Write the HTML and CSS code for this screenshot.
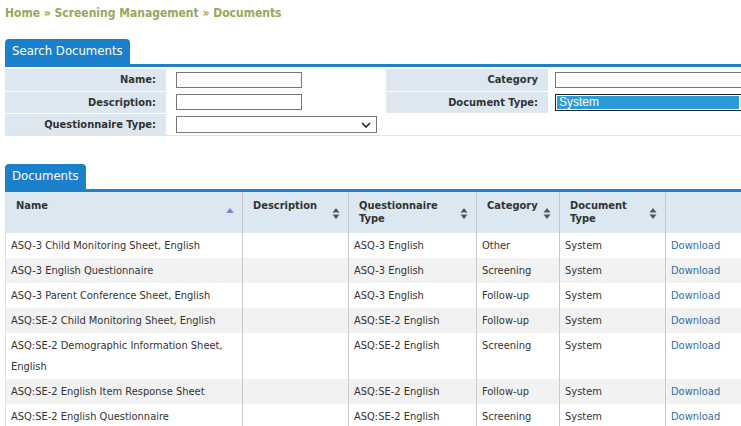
FILE: index.html
```html
<!DOCTYPE html>
<html>
<head>
<meta charset="utf-8">
<link rel="stylesheet" href="styles.css">
</head>
<body>
<div class="page">
  <div class="crumbs">Home » Screening Management » Documents</div>

  <div class="tabbar tabbar1"><span class="tab">Search Documents</span></div>
  <table class="form">
    <colgroup>
      <col class="c1"><col class="c2"><col class="c3"><col class="c4">
    </colgroup>
    <tr>
      <th class="lbl">Name:</th>
      <td class="fld"><input class="txt" type="text"></td>
      <th class="lbl">Category</th>
      <td class="fld fld2"><input class="txt wide" type="text"></td>
    </tr>
    <tr>
      <th class="lbl">Description:</th>
      <td class="fld"><input class="txt" type="text"></td>
      <th class="lbl">Document Type:</th>
      <td class="fld fld2">
        <div class="listbox"><div class="opt">System</div><div class="sb"></div></div>
      </td>
    </tr>
    <tr>
      <th class="lbl">Questionnaire Type:</th>
      <td class="fld">
        <div class="selwrap">
          <select class="sel"><option></option></select>
          <svg class="chev" width="10" height="6" viewBox="0 0 10 6"><path d="M1 1 L5 5 L9 1" fill="none" stroke="#222" stroke-width="1.6"/></svg>
        </div>
      </td>
      <td class="blank"></td>
      <td class="blank"></td>
    </tr>
  </table>

  <div class="tabbar tabbar2"><span class="tab">Documents</span></div>
  <table class="grid">
    <colgroup>
      <col style="width:237px"><col style="width:106px"><col style="width:128px"><col style="width:83px"><col style="width:106px"><col style="width:100px">
    </colgroup>
    <thead>
      <tr>
        <th><div class="hd"><span>Name</span><svg class="sort" width="8" height="13" viewBox="0 0 8 13"><path d="M0 6 L4 1 L8 6 Z" fill="#8585cf"/></svg></div></th>
        <th><div class="hd"><span>Description</span><svg class="sort" width="8" height="13" viewBox="0 0 8 13"><path d="M0.5 5.5 L4 1 L7.5 5.5 Z M0.5 7.5 L7.5 7.5 L4 12 Z" fill="#555"/></svg></div></th>
        <th><div class="hd"><span>Questionnaire Type</span><svg class="sort" width="8" height="13" viewBox="0 0 8 13"><path d="M0.5 5.5 L4 1 L7.5 5.5 Z M0.5 7.5 L7.5 7.5 L4 12 Z" fill="#555"/></svg></div></th>
        <th><div class="hd"><span>Category</span><svg class="sort" width="8" height="13" viewBox="0 0 8 13"><path d="M0.5 5.5 L4 1 L7.5 5.5 Z M0.5 7.5 L7.5 7.5 L4 12 Z" fill="#555"/></svg></div></th>
        <th><div class="hd"><span>Document Type</span><svg class="sort" width="8" height="13" viewBox="0 0 8 13"><path d="M0.5 5.5 L4 1 L7.5 5.5 Z M0.5 7.5 L7.5 7.5 L4 12 Z" fill="#555"/></svg></div></th>
        <th></th>
      </tr>
    </thead>
    <tbody>
      <tr><td>ASQ-3 Child Monitoring Sheet, English</td><td></td><td>ASQ-3 English</td><td>Other</td><td>System</td><td><a href="#">Download</a></td></tr>
      <tr><td>ASQ-3 English Questionnaire</td><td></td><td>ASQ-3 English</td><td>Screening</td><td>System</td><td><a href="#">Download</a></td></tr>
      <tr><td>ASQ-3 Parent Conference Sheet, English</td><td></td><td>ASQ-3 English</td><td>Follow-up</td><td>System</td><td><a href="#">Download</a></td></tr>
      <tr><td>ASQ:SE-2 Child Monitoring Sheet, English</td><td></td><td>ASQ:SE-2 English</td><td>Follow-up</td><td>System</td><td><a href="#">Download</a></td></tr>
      <tr><td>ASQ:SE-2 Demographic Information Sheet, English</td><td></td><td>ASQ:SE-2 English</td><td>Screening</td><td>System</td><td><a href="#">Download</a></td></tr>
      <tr><td>ASQ:SE-2 English Item Response Sheet</td><td></td><td>ASQ:SE-2 English</td><td>Follow-up</td><td>System</td><td><a href="#">Download</a></td></tr>
      <tr><td>ASQ:SE-2 English Questionnaire</td><td></td><td>ASQ:SE-2 English</td><td>Screening</td><td>System</td><td><a href="#">Download</a></td></tr>
    </tbody>
  </table>
</div>
</body>
</html>
```

FILE: styles.css
```css
html, body {
  margin: 0;
  padding: 0;
  overflow: hidden;
  background: #fff;
}
body {
  font-family: "DejaVu Sans Condensed", "DejaVu Sans", Verdana, sans-serif;
  font-stretch: condensed;
  font-size: 11px;
  color: #333;
}
.page {
  width: 830px;
  padding: 0 0 0 5px;
}
.crumbs {
  font-weight: bold;
  font-size: 12px;
  color: #9aa65a;
  padding-top: 6px;
  height: 39px;
  box-sizing: border-box;
}
.tabbar {
  display: flex;
  border-bottom: 3px solid #1f80c6;
}
.tabbar1 {
  margin-bottom: 2px;
}
.tabbar2 {
  margin-top: 28px;
}
.tab {
  background: #1b80cb;
  color: #fff;
  font-size: 13px;
  padding: 0 7px;
  height: 25px;
  line-height: 24px;
  border-radius: 4px 4px 0 0;
}
.form {
  border-collapse: collapse;
  width: 793px;
  table-layout: fixed;
  border-bottom: 1px solid #dbe6ef;
}
.form .c1 { width: 161px; }
.form .c2 { width: 220px; }
.form .c3 { width: 162px; }
.form .c4 { width: 250px; }
.form th, .form td {
  box-sizing: border-box;
}
.form tr + tr th, .form tr + tr td {
  border-top: 1px solid #fff;
}
.form .lbl {
  background: #dce7f0;
  text-align: right;
  font-weight: bold;
  padding: 0 10px 0 0;
  height: 22px;
  white-space: nowrap;
}
.form .fld {
  padding: 0 0 0 10px;
  height: 22px;
}
.form .fld2 { padding-left: 7px; }
.txt {
  display: block;
  box-sizing: border-box;
  width: 126px;
  height: 16px;
  border: 1px solid #767676;
  margin: 0;
  padding: 0 2px;
  font-size: 11px;
}
.txt.wide { width: 220px; }
.listbox {
  display: flex;
  box-sizing: border-box;
  width: 220px;
  height: 17px;
  border: 1px solid #222;
  padding: 1px;
}
.opt {
  width: 180px;
  background: #2b9bd8;
  color: #fff;
  font-family: "Liberation Sans", Arial, sans-serif;
  font-stretch: normal;
  font-size: 12px;
  line-height: 13px;
  padding-left: 2px;
}
.sb {
  flex: 1;
  background: #e6e6e6;
  margin-left: 1px;
}
.selwrap {
  position: relative;
  width: 201px;
  height: 17px;
}
.sel {
  appearance: none;
  -webkit-appearance: none;
  box-sizing: border-box;
  width: 201px;
  height: 17px;
  border: 1px solid #767676;
  border-radius: 0;
  background: #fff;
  margin: 0;
  font-size: 11px;
  display: block;
}
.chev {
  position: absolute;
  right: 6px;
  top: 6px;
}
.blank {
  background: #fff;
}
.grid {
  border-collapse: collapse;
  table-layout: fixed;
  width: 760px;
}
.grid th {
  background: #dbe7f1;
  text-align: left;
  vertical-align: top;
  font-weight: bold;
  height: 41px;
  padding: 0;
  border-right: 1px solid #c4c8cc;
  box-sizing: border-box;
}
.hd {
  display: flex;
  justify-content: space-between;
  align-items: flex-start;
  padding: 7px 8px 0 10px;
  line-height: 13px;
}
.sort {
  flex: none;
  margin-top: 8px;
  margin-left: 4px;
}
.grid td {
  padding: 2px 5px;
  line-height: 21px;
  vertical-align: top;
  border-right: 1px solid #c8c8c8;
}
.grid th:first-child, .grid td:first-child {
  border-left: 1px solid #e2e2e2;
}
.grid tbody tr:nth-child(even) td {
  background: #f2f2f2;
}
.grid a {
  color: #2d6ea6;
  text-decoration: none;
}
```
